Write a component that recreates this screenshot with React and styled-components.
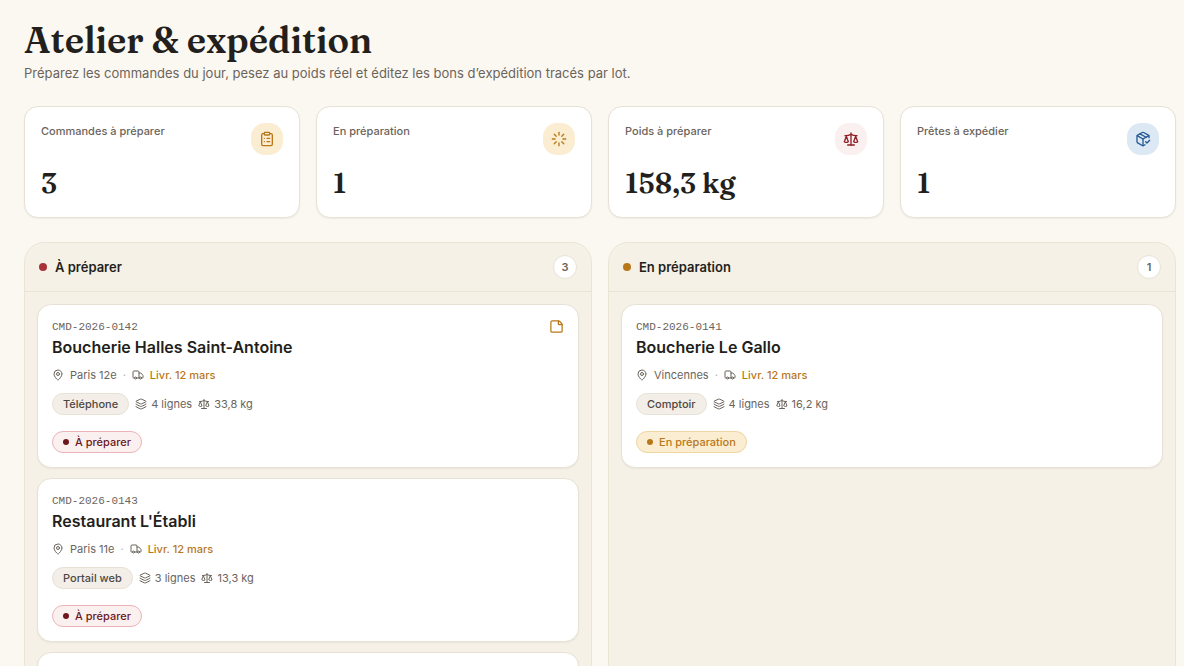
import React from 'react';
import styled, {createGlobalStyle} from 'styled-components';
import {
    ClipboardList,
    Layers,
    Loader,
    MapPin,
    PackageCheck,
    Scale,
    StickyNote,
    Truck
} from 'lucide-react';

const GlobalStyle = createGlobalStyle`
  *, *::before, *::after {
    box-sizing: border-box;
  }

  body {
    margin: 0;
    background-color: #fbf8f1;
    color: #231f1c;
    font-family: Inter, "Liberation Sans", sans-serif;
    font-size: 13px;
  }

  h1, h2, h3, p, ul {
    margin: 0;
    padding: 0;
  }
`

const tones = {
    amber: {bg: '#fbedd2', border: '#efd5a0', color: '#b8781a'},
    red: {bg: '#fbf0f0', border: '#ecb9bc', color: '#8f1f27'},
    wine: {bg: '#fbf0f0', border: '#ecb4b8', color: '#6b171d'},
    blue: {bg: '#dce8f4', border: '#b9d0ea', color: '#245a94'},
}

const Page = styled.main`
  min-height: 100vh;
  padding: 20px 8px 24px 24px;
`

const Title = styled.h1`
  font-family: Fraunces, "Liberation Serif", serif;
  font-optical-sizing: none;
  font-size: 36px;
  font-weight: 600;
  line-height: 40px;
`

const Subtitle = styled.p`
  margin-top: 4px;
  line-height: 18px;
  color: #6b645c;
`

const StatGrid = styled.section`
  display: grid;
  grid-template-columns: repeat(4, 1fr);
  gap: 16px;
  margin-top: 24px;
`

const StatCard = styled.article`
  padding: 16px;
  background-color: #fff;
  border: 1px solid #e8e2d6;
  border-radius: 14px;
  box-shadow: 0 1px 2px rgba(35, 31, 28, 0.06);
`

const StatTop = styled.div`
  display: flex;
  align-items: flex-start;
  justify-content: space-between;
`

const StatLabel = styled.h2`
  font-size: 11px;
  font-weight: 500;
  line-height: 16px;
  color: #6b645c;
`

const StatIcon = styled.span`
  display: flex;
  align-items: center;
  justify-content: center;
  width: 32px;
  height: 32px;
  border-radius: 14px;
  background-color: ${({$tone}) => tones[$tone].bg};
  color: ${({$tone}) => tones[$tone].color};
`

const StatValue = styled.p`
  margin-top: 10px;
  font-family: Fraunces, "Liberation Serif", serif;
  font-optical-sizing: none;
  font-size: 28px;
  font-weight: 600;
  line-height: 36px;
`

const Board = styled.section`
  display: grid;
  grid-template-columns: repeat(2, 1fr);
  gap: 16px;
  margin-top: 24px;
`

const Column = styled.section`
  background-color: #f6f1e6;
  border: 1px solid #ebe5d6;
  border-radius: 20px;
`

const ColumnHeader = styled.header`
  display: flex;
  align-items: center;
  gap: 8px;
  padding: 12px 14px;
  border-bottom: 1px solid #ebe5d6;
`

const ColumnDot = styled.span`
  width: 8px;
  height: 8px;
  border-radius: 50%;
  background-color: ${({$color}) => $color};
`

const ColumnTitle = styled.h2`
  flex: 1;
  font-size: 13px;
  font-weight: 600;
  line-height: 20px;
`

const Count = styled.span`
  display: flex;
  align-items: center;
  justify-content: center;
  width: 24px;
  height: 24px;
  background-color: #fff;
  border: 1px solid #e8e2d6;
  border-radius: 50%;
  font-size: 11px;
  font-weight: 600;
  color: #6b645c;
`

const OrderList = styled.ul`
  display: flex;
  flex-direction: column;
  gap: 10px;
  padding: 12px;
  list-style: none;
`

const OrderItem = styled.li`
  padding: 14px;
  background-color: #fff;
  border: 1px solid #e8e2d6;
  border-radius: 14px;
  box-shadow: 0 1px 2px rgba(35, 31, 28, 0.06);
`

const OrderTop = styled.div`
  display: flex;
  align-items: flex-start;
  justify-content: space-between;
  height: 16px;
  color: #b8781a;
`

const OrderCode = styled.span`
  font-family: "Liberation Mono", monospace;
  font-size: 11px;
  line-height: 16px;
  color: #6b645c;
`

const Client = styled.h3`
  font-size: 16px;
  font-weight: 600;
  line-height: 24px;
`

const Row = styled.div`
  display: flex;
  align-items: center;
  gap: 6px;
  margin-top: ${({$top}) => $top}px;
  font-size: 11px;
  line-height: 16px;
  color: #6b645c;
`

const Separator = styled.span`
  color: #b9b1a4;
`

const Delivery = styled.span`
  font-weight: 500;
  color: #b8781a;
`

const Detail = styled.span`
  display: flex;
  align-items: center;
  gap: 4px;
`

const Pill = styled.span`
  display: inline-flex;
  align-items: center;
  gap: 6px;
  height: 22px;
  padding: 0 10px;
  border: 1px solid ${({$tone}) => $tone ? tones[$tone].border : '#e8e2d6'};
  border-radius: 11px;
  background-color: ${({$tone}) => $tone ? tones[$tone].bg : '#f3eee8'};
  color: ${({$tone}) => $tone ? tones[$tone].color : '#4f4842'};
  font-size: 11px;
  font-weight: 500;
`

const PillDot = styled.span`
  width: 6px;
  height: 6px;
  border-radius: 50%;
  background-color: currentColor;
`

const stats = [
    {label: 'Commandes à préparer', value: '3', tone: 'amber', icon: ClipboardList},
    {label: 'En préparation', value: '1', tone: 'amber', icon: Loader},
    {label: 'Poids à préparer', value: '158,3 kg', tone: 'red', icon: Scale},
    {label: 'Prêtes à expédier', value: '1', tone: 'blue', icon: PackageCheck},
]

const columns = [
    {
        title: 'À préparer',
        dot: '#a8323a',
        tone: 'wine',
        orders: [
            {code: 'CMD-2026-0142', client: 'Boucherie Halles Saint-Antoine', city: 'Paris 12e', date: '12 mars', channel: 'Téléphone', lines: 4, weight: '33,8 kg', note: true},
            {code: 'CMD-2026-0143', client: "Restaurant L'Établi", city: 'Paris 11e', date: '12 mars', channel: 'Portail web', lines: 3, weight: '13,3 kg'},
            {code: 'CMD-2026-0144', client: 'Boucherie du Marché', city: 'Paris 15e', date: '13 mars', channel: 'Téléphone', lines: 5, weight: '111,2 kg'},
        ],
    },
    {
        title: 'En préparation',
        dot: '#b8781a',
        tone: 'amber',
        orders: [
            {code: 'CMD-2026-0141', client: 'Boucherie Le Gallo', city: 'Vincennes', date: '12 mars', channel: 'Comptoir', lines: 4, weight: '16,2 kg'},
        ],
    },
]

const Order = ({order, status, tone}) => (
    <OrderItem>
        <OrderTop>
            <OrderCode>{order.code}</OrderCode>
            {order.note && <StickyNote size={15} aria-label="Note"/>}
        </OrderTop>
        <Client>{order.client}</Client>
        <Row $top={8}>
            <MapPin size={12}/>
            <span>{order.city}</span>
            <Separator>·</Separator>
            <Truck size={12}/>
            <Delivery>Livr. {order.date}</Delivery>
        </Row>
        <Row $top={10}>
            <Pill>{order.channel}</Pill>
            <Detail><Layers size={12}/>{order.lines} lignes</Detail>
            <Detail><Scale size={12}/>{order.weight}</Detail>
        </Row>
        <Row $top={16}>
            <Pill $tone={tone}><PillDot/>{status}</Pill>
        </Row>
    </OrderItem>
)

const App = () => {
    return (
        <>
            <GlobalStyle/>
            <Page>
                <header>
                    <Title>Atelier &amp; expédition</Title>
                    <Subtitle>Préparez les commandes du jour, pesez au poids réel et éditez les bons d’expédition tracés par lot.</Subtitle>
                </header>
                <StatGrid>
                    {stats.map(({label, value, tone, icon: Icon}) => (
                        <StatCard key={label}>
                            <StatTop>
                                <StatLabel>{label}</StatLabel>
                                <StatIcon $tone={tone}><Icon size={16}/></StatIcon>
                            </StatTop>
                            <StatValue>{value}</StatValue>
                        </StatCard>
                    ))}
                </StatGrid>
                <Board>
                    {columns.map(column => (
                        <Column key={column.title}>
                            <ColumnHeader>
                                <ColumnDot $color={column.dot}/>
                                <ColumnTitle>{column.title}</ColumnTitle>
                                <Count>{column.orders.length}</Count>
                            </ColumnHeader>
                            <OrderList>
                                {column.orders.map(order => (
                                    <Order key={order.code} order={order} status={column.title} tone={column.tone}/>
                                ))}
                            </OrderList>
                        </Column>
                    ))}
                </Board>
            </Page>
        </>
    );
}

export default App;
